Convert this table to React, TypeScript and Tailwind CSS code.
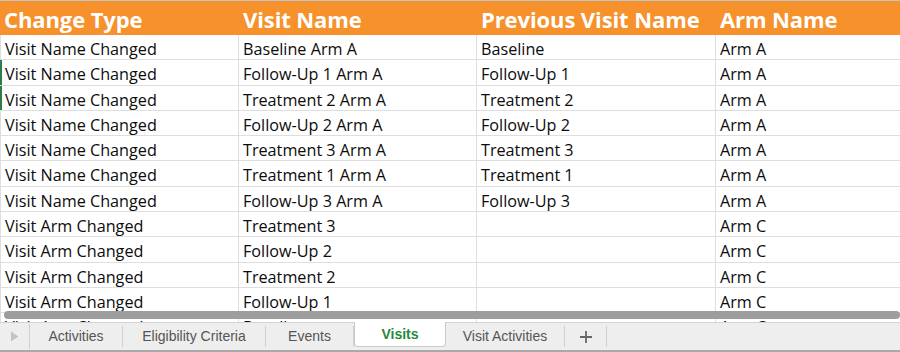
import React from 'react';

type Row = [string, string, string, string];

const rows: Row[] = [
    ["Visit Name Changed", "Baseline Arm A", "Baseline", "Arm A"],
    ["Visit Name Changed", "Follow-Up 1 Arm A", "Follow-Up 1", "Arm A"],
    ["Visit Name Changed", "Treatment 2 Arm A", "Treatment 2", "Arm A"],
    ["Visit Name Changed", "Follow-Up 2 Arm A", "Follow-Up 2", "Arm A"],
    ["Visit Name Changed", "Treatment 3 Arm A", "Treatment 3", "Arm A"],
    ["Visit Name Changed", "Treatment 1 Arm A", "Treatment 1", "Arm A"],
    ["Visit Name Changed", "Follow-Up 3 Arm A", "Follow-Up 3", "Arm A"],
    ["Visit Arm Changed", "Treatment 3", "", "Arm C"],
    ["Visit Arm Changed", "Follow-Up 2", "", "Arm C"],
    ["Visit Arm Changed", "Treatment 2", "", "Arm C"],
    ["Visit Arm Changed", "Follow-Up 1", "", "Arm C"],
    ["Visit Arm Changed", "Baseline", "", "Arm C"],
];

const headers = ["Change Type", "Visit Name", "Previous Visit Name", "Arm Name"];

const tabs = [
    {label: "Activities", w: "w-[93px]"},
    {label: "Eligibility Criteria", w: "w-[143px]"},
    {label: "Events", w: "w-[88px]"},
    {label: "Visits", w: "w-[92px]", active: true},
    {label: "Visit Activities", w: "w-[119px]"},
];

const cols = "grid grid-cols-[239px_238px_239px_184px]";

const App = () => {
    return (
        <div className="w-[900px] h-[352px] bg-white overflow-hidden flex flex-col border-t border-[#c4c4c4]"
        style={{fontFamily: '"Open Sans", "Noto Sans", sans-serif'}}>
            <div className="relative h-[321px] overflow-hidden">
                <div className={`${cols} h-[34px] bg-[#f6912c] text-white font-bold text-[22px] items-center`}>
                    {headers.map(h => (
                        <div key={h} className="pl-[4px] pt-[2px] leading-none whitespace-nowrap tracking-[-0.1px]">{h}</div>
                    ))}
                </div>

                {rows.map((r, i) => (
                    <div key={i} className={`${cols} h-[25.3px] border-b border-[#dedede] text-[16.2px] text-[#0c0c0c] relative`}>
                        {(i === 1 || i === 2) && <div className="absolute left-0 top-0 bottom-0 w-[2px] bg-[#2e7d46]"/>}
                        {r.map((c, j) => (
                            <div key={j} className={`pl-[4px] pt-[2px] flex items-center whitespace-nowrap ${j < 3 ? "border-r border-[#dedede]" : ""} ${j === 0 ? "border-l border-[#dedede]" : ""}`}>{c}</div>
                        ))}
                    </div>
                ))}

                {/* horizontal scrollbar overlay */}
                <div className="absolute left-[4px] right-0 top-[310px] h-[8px] rounded-full bg-[#9d9d9d]"/>
            </div>

            <div className="flex-1 flex items-stretch bg-[#eeeeee] border-t border-[#d4d4d4] border-b-2 border-b-[#a9a9a9] text-[14px] text-[#555]"
            style={{fontFamily: '"Liberation Sans", Arial, sans-serif'}}>
                <div className="w-[30px] flex items-center justify-center border-r border-[#d0d0d0] my-[1px]">
                    <svg width="9" height="11" viewBox="0 0 9 11"><path d="M1 0.5 L8.5 5.5 L1 10.5 Z" fill="#c3c3c3"/></svg>
                </div>
                {tabs.map(t => t.active ? (
                    <div key={t.label} className={`${t.w} -mt-[1px] mb-[3px] bg-white border border-t-0 border-[#c9c9c9] rounded-b-[4px] flex items-center justify-center text-[#1f8a3b] font-bold`}>{t.label}</div>
                ) : (
                    <div key={t.label} className={`${t.w} flex items-center justify-center border-r border-[#d0d0d0] my-[3px]`}>{t.label}</div>
                ))}
                <div className="w-[42px] flex items-center justify-center border-r border-[#d0d0d0] my-[3px]">
                    <svg width="12" height="12" viewBox="0 0 12 12"><path d="M6 0v12M0 6h12" stroke="#666" strokeWidth="1.8"/></svg>
                </div>
            </div>
        </div>
    );
}

export default App;
